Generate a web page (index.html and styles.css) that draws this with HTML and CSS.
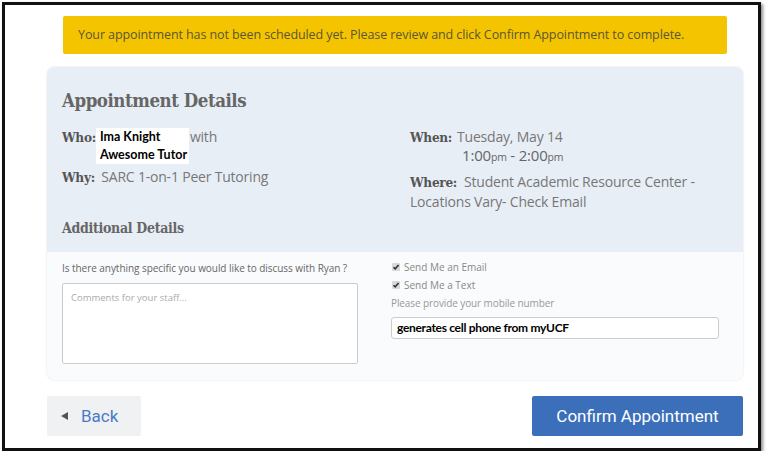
FILE: index.html
```html
<!DOCTYPE html>
<html>
<head>
<meta charset="utf-8">
<link rel="stylesheet" href="styles.css">
</head>
<body>
<div class="frame">
  <div class="banner">Your appointment has not been scheduled yet. Please review and click Confirm Appointment to complete.</div>
  <div class="panel">
    <div class="panel-top">
      <h2 class="title">Appointment Details</h2>
      <div class="details">
        <div class="col-left">
          <div class="row who">
            <span class="label">Who:</span>
            <span class="names"><span>Ima Knight</span><span>Awesome Tutor</span></span>
            <span class="val with">with</span>
          </div>
          <div class="row why"><span class="label">Why:</span> <span class="val">SARC 1-on-1 Peer Tutoring</span></div>
        </div>
        <div class="col-right">
          <div class="row when">
            <span class="label">When:</span>
            <div class="val when-val">Tuesday, May 14<span class="time">1:00<small>pm</small> - 2:00<small>pm</small></span></div>
          </div>
          <div class="row where">
            <div class="where-line"><span class="label">Where:</span><span class="where-val">Student Academic Resource Center -</span></div>
            <div class="where-line">Locations Vary- Check Email</div>
          </div>
        </div>
      </div>
      <h3 class="subtitle">Additional Details</h3>
    </div>
    <div class="panel-bottom">
      <div class="bcol-left">
        <div class="question">Is there anything specific you would like to discuss with Ryan ?</div>
        <div class="textarea">Comments for your staff...</div>
      </div>
      <div class="bcol-right">
        <div class="check"><span class="box"><svg viewBox="0 0 8 8" width="8" height="8"><path d="M1.5 4.2 L3.2 5.9 L6.6 2" fill="none" stroke="#333" stroke-width="1.6"/></svg></span>Send Me an Email</div>
        <div class="check"><span class="box"><svg viewBox="0 0 8 8" width="8" height="8"><path d="M1.5 4.2 L3.2 5.9 L6.6 2" fill="none" stroke="#333" stroke-width="1.6"/></svg></span>Send Me a Text</div>
        <div class="hint">Please provide your mobile number</div>
        <div class="input">generates cell phone from myUCF</div>
      </div>
    </div>
  </div>
  <div class="actions">
    <div class="btn back"><span class="tri"></span>Back</div>
    <div class="btn confirm">Confirm Appointment</div>
  </div>
</div>
</body>
</html>
```
FILE: styles.css
```css
html, body {
  margin: 0;
  padding: 0;
  background: #fff;
}
.frame {
  margin: 2px 0 0 2px;
  width: 759px;
  height: 449px;
  box-sizing: border-box;
  border: 3px solid #111;
  box-shadow: 2px 2px 3px rgba(0,0,0,0.45);
  background: #fff;
  overflow: hidden;
  font-family: "Open Sans", sans-serif;
}
.banner {
  margin: 11px 0 0 58px;
  width: 664px;
  height: 38px;
  box-sizing: border-box;
  padding-left: 15px;
  background: #f5c400;
  border-radius: 2px;
  color: #5a5636;
  font-size: 12.5px;
  line-height: 38px;
  letter-spacing: -0.09px;
  white-space: nowrap;
}
.panel {
  margin: 13px 0 0 42px;
  width: 696px;
  border-radius: 8px;
  overflow: hidden;
  box-shadow: 0 0 2px rgba(120,140,170,0.35);
}
.panel-top {
  background: #e8eef6;
  padding: 22px 15px 15px;
  height: 185px;
  box-sizing: border-box;
}
.title {
  margin: 0;
  font-family: "DejaVu Serif Condensed", "DejaVu Serif", serif;
  font-weight: bold;
  font-size: 18.5px;
  letter-spacing: -0.45px;
  line-height: 24px;
  color: #666;
}
.details {
  display: flex;
  margin-top: 15px;
}
.col-left {
  width: 348px;
}
.col-right {
  width: 318px;
}
.row {
  font-size: 14px;
  line-height: 18px;
  color: #777;
  letter-spacing: -0.2px;
}
.label {
  font-family: "DejaVu Serif Condensed", "DejaVu Serif", serif;
  font-weight: bold;
  font-size: 13.5px;
  letter-spacing: -0.3px;
  color: #555;
}
.who {
  display: flex;
  align-items: flex-start;
}
.names {
  display: flex;
  flex-direction: column;
  background: #fff;
  width: 93px;
  box-sizing: border-box;
  padding-left: 4px;
  font-family: Lato, sans-serif;
  font-weight: bold;
  font-size: 12.5px;
  line-height: 18px;
  letter-spacing: 0;
  color: #000;
}
.with {
  margin-left: 1px;
}
.why {
  margin-top: 4px;
}
.why .val {
  margin-left: 3px;
}
.when {
  display: flex;
  align-items: flex-start;
}
.when-val {
  margin-left: 5px;
}
.time {
  display: block;
  margin-left: 5px;
  font-size: 15px;
  line-height: 18px;
  color: #666;
}
.time small {
  font-size: 10.5px;
}
.where {
  margin-top: 6px;
  line-height: 20px;
}
.where-val {
  margin-left: 7px;
}
.subtitle {
  margin: 6px 0 0;
  font-family: "DejaVu Serif Condensed", "DejaVu Serif", serif;
  font-weight: bold;
  font-size: 14px;
  letter-spacing: -0.3px;
  line-height: 20px;
  color: #666;
}
.panel-bottom {
  background: #fafbfd;
  height: 128px;
  box-sizing: border-box;
  padding: 0 15px;
  display: flex;
}
.bcol-left {
  width: 296px;
  margin-top: 8px;
}
.question {
  font-size: 10px;
  line-height: 16px;
  letter-spacing: -0.05px;
  color: #666;
  white-space: nowrap;
}
.textarea {
  margin-top: 7px;
  height: 81px;
  box-sizing: border-box;
  border: 1px solid #ccc;
  border-radius: 2px;
  background: #fff;
  padding: 6px 8px;
  font-size: 9.5px;
  line-height: 16px;
  color: #aaa;
}
.bcol-right {
  width: 328px;
  margin-left: 33px;
  margin-top: 6px;
}
.check {
  display: flex;
  align-items: center;
  font-size: 10px;
  line-height: 18px;
  color: #888;
}
.box {
  display: inline-flex;
  width: 8px;
  height: 8px;
  margin: 0 4px 0 1px;
  background: #d8d8d8;
  border-radius: 1px;
}
.box svg {
  display: block;
}
.hint {
  font-size: 10px;
  letter-spacing: -0.1px;
  line-height: 18px;
  color: #999;
}
.input {
  margin-top: 5px;
  height: 22px;
  box-sizing: border-box;
  border: 1px solid #ccc;
  border-radius: 3px;
  background: #fff;
  padding-left: 5px;
  font-family: Lato, sans-serif;
  font-weight: bold;
  font-size: 12px;
  letter-spacing: -0.3px;
  line-height: 20px;
  color: #000;
}
.actions {
  display: flex;
  justify-content: space-between;
  margin: 16px 0 0 42px;
  width: 696px;
}
.btn {
  height: 40px;
  box-sizing: border-box;
  border-radius: 2px;
  font-family: Roboto, sans-serif;
  font-size: 17px;
  line-height: 40px;
  display: flex;
  align-items: center;
}
.back {
  width: 94px;
  background: #f0f1f3;
  color: #4a7bc6;
  padding-left: 14px;
}
.tri {
  width: 0;
  height: 0;
  border-top: 4.5px solid transparent;
  border-bottom: 4.5px solid transparent;
  border-right: 7px solid #555;
  margin-right: 13px;
}
.confirm {
  width: 211px;
  background: #3b6fba;
  color: #fff;
  justify-content: center;
}
```
